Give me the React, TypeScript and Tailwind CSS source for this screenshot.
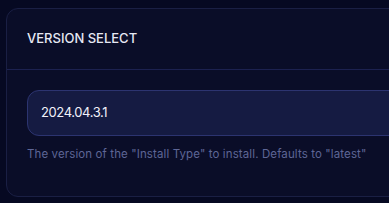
import React from 'react';

const App: React.FC = () => {
  return (
    <div className="w-[389px] h-[203px] overflow-hidden bg-[#060922] pl-[6px] pt-[8px]">
      <div className="w-[420px] h-[189px] rounded-[12px] border border-[#1a1f44] bg-[#0a0d28]">
        {/* Header */}
        <div className="h-[61px] flex items-center pl-[20px] border-b border-[#1c2150]">
          <span className="font-['Inter',sans-serif] text-[13px] font-medium text-[#e6e8f4] uppercase">
            Version Select
          </span>
        </div>

        {/* Body */}
        <div className="pl-[20px] pt-[20px]">
          <div className="h-[46px] rounded-[12px] border border-[#2c3470] bg-[#151b42] flex items-center pl-[13px]">
            <span className="font-['Inter',sans-serif] text-[13px] tracking-[-0.03em] text-[#f1f2fa]">2024.04.3.1</span>
          </div>
          <p className="mt-[10px] font-['Inter',sans-serif] text-[11.5px] text-[#5e6696] tracking-[0.01em]">
            The version of the "Install Type" to install. Defaults to "latest"
          </p>
        </div>
      </div>
    </div>
  );
};

export default App;
